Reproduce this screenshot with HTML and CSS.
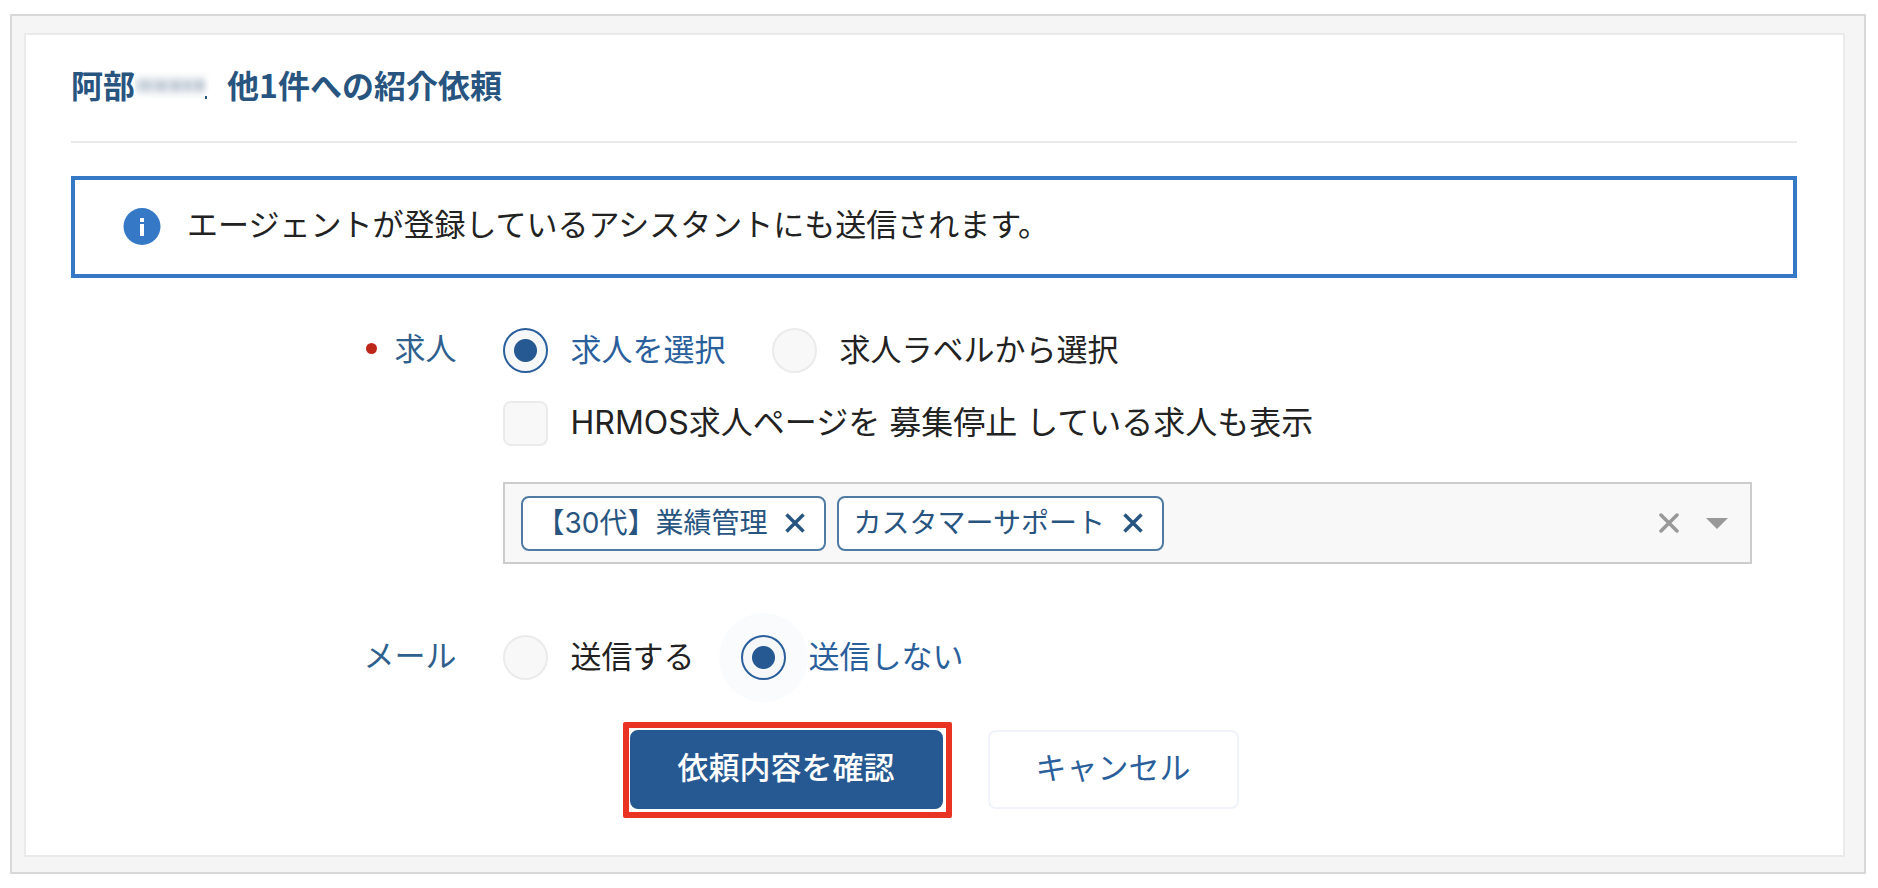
FILE: index.html
```html
<!DOCTYPE html>
<html lang="ja">
<head>
<meta charset="utf-8">
<meta name="viewport" content="width=device-width, initial-scale=1">
<title>紹介依頼</title>
<link rel="stylesheet" href="styles.css">
</head>
<body>
<main class="frame">
  <form class="card">
    <h1 class="title">
      <span>阿部</span>
      <svg class="masked" viewBox="0 0 74 32" aria-hidden="true">
        <defs><filter id="soft" x="-10%" y="-50%" width="120%" height="200%"><feGaussianBlur stdDeviation="3 4"/></filter></defs>
        <g filter="url(#soft)" fill="#8195ad">
          <rect x="0" y="10" width="70" height="13" opacity=".35"/>
          <rect x="6" y="12" width="9" height="8" opacity=".3"/>
          <rect x="22" y="13" width="8" height="8" opacity=".4"/>
          <rect x="37" y="13" width="8" height="8" opacity=".4"/>
          <rect x="49" y="13" width="7" height="8" opacity=".3"/>
          <rect x="61" y="12" width="8" height="9" opacity=".4"/>
        </g>
        <rect x="70" y="27" width="2" height="3" fill="#28557f"/>
      </svg>
      <span>他1件への紹介依頼</span>
    </h1>

    <div class="notice" role="note">
      <svg class="notice-icon" viewBox="0 0 38 38" aria-hidden="true">
        <circle cx="19" cy="18.500" r="18.500" fill="#3478c6"/>
        <rect x="17" y="10" width="4" height="4" fill="#fff"/>
        <rect x="17" y="16" width="4" height="12" fill="#fff"/>
      </svg>
      <p class="notice-text">エージェントが登録しているアシスタントにも送信されます。</p>
    </div>

    <div class="row">
      <div class="label required" id="job-label">求人</div>
      <div class="field">
        <div class="options" role="radiogroup" aria-labelledby="job-label">
          <label class="option"><input class="radio" type="radio" name="job" checked><span>求人を選択</span></label>
          <label class="option"><input class="radio" type="radio" name="job"><span>求人ラベルから選択</span></label>
        </div>
        <label class="option stopped"><input class="check" type="checkbox"><span>HRMOS求人ページを 募集停止 している求人も表示</span></label>
        <div class="multi">
          <span class="tag">【30代】業績管理
            <button class="icon-button" type="button" aria-label="【30代】業績管理を削除"><svg class="cross" viewBox="0 0 40 40"><path d="M3 3 37 37M37 3 3 37"/></svg></button>
          </span>
          <span class="tag">カスタマーサポート
            <button class="icon-button" type="button" aria-label="カスタマーサポートを削除"><svg class="cross" viewBox="0 0 40 40"><path d="M3 3 37 37M37 3 3 37"/></svg></button>
          </span>
          <input class="search" type="text" aria-labelledby="job-label">
          <button class="icon-button muted" type="button" aria-label="すべて削除"><svg class="cross" viewBox="0 0 40 40"><path d="M4 4 36 36M36 4 4 36"/></svg></button>
          <button class="icon-button muted" type="button" aria-label="開く"><svg class="caret" viewBox="0 0 22 11"><path d="M0 0H22L11 11Z"/></svg></button>
        </div>
      </div>
    </div>

    <div class="row">
      <div class="label" id="mail-label">メール</div>
      <div class="field">
        <div class="options" role="radiogroup" aria-labelledby="mail-label">
          <label class="option"><input class="radio" type="radio" name="mail"><span>送信する</span></label>
          <label class="option"><input class="radio halo" type="radio" name="mail" checked><span>送信しない</span></label>
        </div>
      </div>
    </div>

    <div class="actions">
      <button class="button primary" type="button">依頼内容を確認</button>
      <button class="button secondary" type="button">キャンセル</button>
    </div>
  </form>
</main>
</body>
</html>
```

FILE: styles.css
```css
* {
  box-sizing: border-box;
}

body {
  margin: 0;
  background: #fff;
  color: #222;
  font-family: Inter, "Noto Sans CJK JP", sans-serif;
  font-size: 31px;
  line-height: 45px;
}

button,
input {
  margin: 0;
  font: inherit;
}

.frame {
  margin: 14px 12px 12px 10px;
  padding: 17px 19px 15px 12px;
  border: 2px solid #d8d8d8;
  background: #f5f5f5;
}

.card {
  padding: 27px 46px 46px 45px;
  border: 2px solid #eaeaea;
  background: #fff;
}

.title {
  display: flex;
  align-items: center;
  margin: 0 0 33px;
  padding-bottom: 34px;
  border-bottom: 2px solid #eaeaea;
  color: #28557f;
  font-family: "Noto Sans CJK JP", sans-serif;
  font-size: 32px;
  font-weight: 700;
}

.masked {
  width: 74px;
  height: 32px;
  margin-right: 18px;
}

.notice {
  display: flex;
  align-items: center;
  gap: 26px;
  min-height: 102px;
  margin-bottom: 50px;
  padding: 0 48px;
  border: 4px solid #3478c6;
}

.notice-icon {
  flex: none;
  width: 38px;
  height: 38px;
}

.notice-text {
  margin: 0;
  padding-bottom: 5px;
}

.row {
  display: grid;
  grid-template-columns: 1fr 3fr;
  margin-bottom: 71px;
}

.row + .row {
  margin-bottom: 50px;
}

.label {
  display: flex;
  align-items: center;
  justify-content: flex-end;
  gap: 18px;
  height: 40px;
  padding-right: 46px;
  color: #2f5f8c;
}

.required::before {
  content: "";
  width: 11px;
  height: 11px;
  border-radius: 50%;
  background: #bd2719;
}

.field {
  min-width: 0;
  padding-right: 45px;
}

.options {
  display: flex;
  flex-wrap: wrap;
  gap: 46px;
}

.option {
  display: flex;
  align-items: center;
  gap: 23px;
}

.option span {
  padding-bottom: 2px;
  line-height: 43px;
}

.stopped {
  margin: 28px 0 36px;
  font-size: 32px;
}

.radio,
.check {
  flex: none;
  width: 45px;
  height: 45px;
  border: 2px solid #ebebeb;
  background: #f8f8f8;
  appearance: none;
}

.radio {
  border-radius: 50%;
}

.check {
  border-radius: 8px;
}

.radio:checked {
  border-color: #2a5f9c;
  background: #f5f7f9 radial-gradient(circle, #265991 11px, transparent 12px);
}

.radio:checked + span {
  color: #2a5f9c;
}

.halo {
  box-shadow: 0 0 0 22px #f9fbfd;
}

.halo + span {
  position: relative;
}

.multi {
  display: flex;
  align-items: center;
  gap: 11px;
  min-height: 82px;
  padding: 0 22px 0 16px;
  border: 2px solid #ccc;
  background: #f8f8f8;
}

.tag {
  display: flex;
  flex: none;
  align-items: center;
  gap: 18px;
  height: 55px;
  padding: 0 19px 0 14px;
  border: 2px solid #4f7aa3;
  border-radius: 8px;
  background: #fff;
  color: #28557f;
  font-size: 28px;
  line-height: 40px;
}

.icon-button {
  display: flex;
  flex: none;
  padding: 0;
  border: 0;
  background: none;
  color: #28557f;
}

.muted {
  color: #999;
}

.muted + .muted {
  margin-left: 16px;
}

.cross {
  width: 20px;
  height: 20px;
  fill: none;
  stroke: currentColor;
  stroke-width: 7;
}

.muted .cross {
  stroke-linecap: round;
}

.caret {
  width: 22px;
  height: 11px;
  fill: currentColor;
}

.search {
  flex: 1;
  min-width: 0;
  border: 0;
  outline: 0;
  background: none;
}

.actions {
  display: flex;
  justify-content: center;
  gap: 45px;
}

.button {
  position: relative;
  min-height: 79px;
  padding: 0 46px 4px;
  border: 2px solid #265991;
  border-radius: 8px;
}

.primary {
  background: #265991;
  color: #fff;
  font-weight: 500;
}

.primary::after {
  content: "";
  position: absolute;
  inset: -10px -11px -11px -9px;
  border: 6px solid #e93323;
  border-radius: 2px;
}

.secondary {
  border-color: #f0f4fa;
  background: #fff;
  color: #2a5f9c;
}
```
